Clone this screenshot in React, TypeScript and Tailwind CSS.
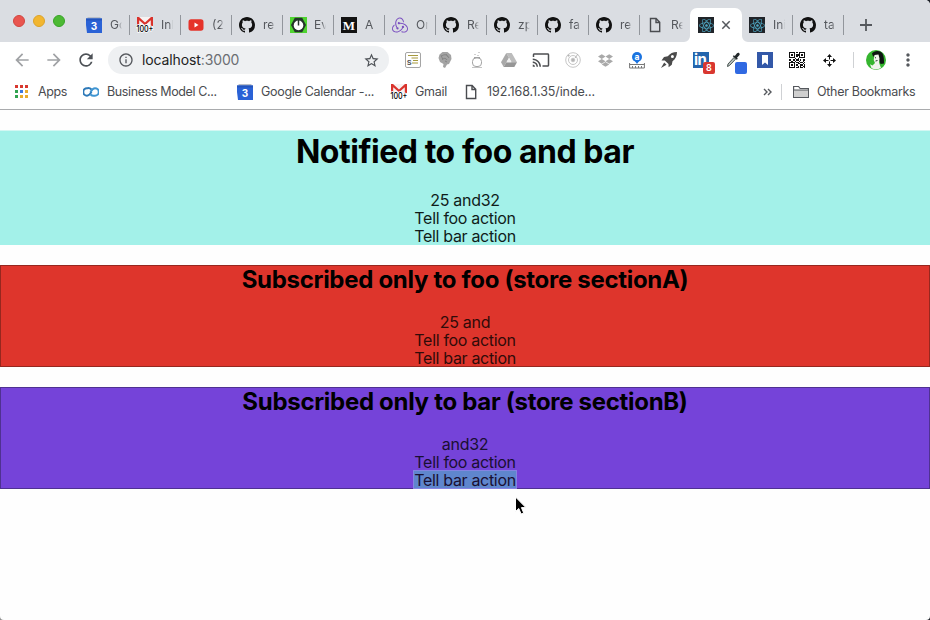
import React from "react";
import { SiRedux } from "react-icons/si";
import { FaReact, FaDropbox } from "react-icons/fa";
import {
  MdRefresh,
  MdArrowBack,
  MdArrowForward,
  MdInfoOutline,
  MdStarBorder,
  MdMoreVert,
  MdCast,
} from "react-icons/md";

const Calendar = () => (
  <svg width="16" height="16" viewBox="0 0 16 16">
    <path d="M1.5 0h13v4h-13z" fill="#b9bec8" />
    <path d="M0 1.5h16V16H1L0 8z" fill="#2a62d6" />
    <path d="M0 1.5h16v2H0z" fill="#2354bd" />
    <text x="8" y="12.6" textAnchor="middle" fontSize="10" fontWeight="700" fill="#fff" fontFamily="Inter, sans-serif">3</text>
  </svg>
);

const GmailIcon = () => (
  <svg width="16" height="16" viewBox="0 0 16 16" className="overflow-visible">
    <path d="M0 0h16v10H0z" fill="#f7f2f2" />
    <path d="M0 0h2l6 5.4L14 0h2v9h-2.2V3.2L8 8.2 2.2 3.2V9H0z" fill="#d9332c" />
    <text x="-0.6" y="15.2" fontSize="9" fontWeight="500" fill="#000" stroke="#fff" strokeWidth="1.6" paintOrder="stroke" textLength="17" lengthAdjust="spacingAndGlyphs" fontFamily="Inter, sans-serif">100+</text>
  </svg>
);

const Youtube = () => (
  <svg width="16" height="16" viewBox="0 0 16 16">
    <rect x="0.5" y="2.3" width="15" height="11.4" rx="2.6" fill="#e5332a" />
    <path d="M6.5 5.5v5l4-2.5z" fill="#fff" />
  </svg>
);

const Power = () => (
  <svg width="17" height="16" viewBox="0 0 17 16">
    <rect width="17" height="16" fill="#4fd430" />
    <path d="M4.8 0.8h7.4L16 8l-3.8 7.2H4.8L1 8z" fill="#24352a" />
    <circle cx="8.5" cy="8.4" r="4.8" fill="#fff" />
    <path d="M8.5 2.5v6" stroke="#24352a" strokeWidth="1.5" />
  </svg>
);

const Medium = () => (
  <div className="flex h-4 w-4 items-center justify-center bg-[#121212] font-['Liberation_Serif',serif] text-[13px] leading-none font-bold text-white">M</div>
);

const Page = () => (
  <svg width="16" height="16" viewBox="0 0 16 16" fill="none" stroke="#4a4c50" strokeWidth="1.4">
    <path d="M3.5 1.5h5.6l3.6 3.8v9.2H3.5zM9 1.7v3.8h3.6" />
  </svg>
);

const ReactTile = () => (
  <div className="flex h-4 w-4 items-center justify-center bg-[#202429]">
    <FaReact size={15} color="#4fa8c4" />
  </div>
);

const Github = () => (
  <svg width="16" height="16" viewBox="0 0 16 16" fill="#111">
    <path d="M8 0C3.58 0 0 3.58 0 8c0 3.54 2.29 6.53 5.47 7.59.4.07.55-.17.55-.38 0-.19-.01-.82-.01-1.49-2.01.37-2.53-.49-2.69-.94-.09-.23-.48-.94-.82-1.13-.28-.15-.68-.52-.01-.53.63-.01 1.08.58 1.23.82.72 1.21 1.87.87 2.33.66.07-.52.28-.87.51-1.07-1.78-.2-3.64-.89-3.64-3.95 0-.87.31-1.59.82-2.15-.08-.2-.36-1.02.08-2.12 0 0 .67-.21 2.2.82.64-.18 1.32-.27 2-.27.68 0 1.36.09 2 .27 1.53-1.04 2.2-.82 2.2-.82.44 1.1.16 1.92.08 2.12.51.56.82 1.27.82 2.15 0 3.07-1.87 3.75-3.65 3.95.29.25.54.73.54 1.48 0 1.07-.01 1.93-.01 2.2 0 .21.15.46.55.38A8.013 8.013 0 0016 8c0-4.42-3.58-8-8-8z" />
  </svg>
);

const tabs: { icon: React.ReactNode; label: string; last?: boolean }[] = [
  { icon: <Calendar />, label: "Go" },
  { icon: <GmailIcon />, label: "Inb" },
  { icon: <Youtube />, label: "(2" },
  { icon: <Github />, label: "re" },
  { icon: <Power />, label: "Ev" },
  { icon: <Medium />, label: "A" },
  { icon: <SiRedux size={16} color="#7a4fc0" />, label: "On" },
  { icon: <Github />, label: "Re" },
  { icon: <Github />, label: "zp" },
  { icon: <Github />, label: "fa" },
  { icon: <Github />, label: "re" },
  { icon: <Page />, label: "Re", last: true },
];

function Tab({ icon, label, last }: { icon: React.ReactNode; label: string; last?: boolean }) {
  return (
    <div className="flex h-full w-[51px] shrink-0 items-center pl-[7px]">
      <div className="w-4 shrink-0">{icon}</div>
      <div className="ml-2 w-[12px] overflow-hidden [mask-image:linear-gradient(to_right,#000_65%,transparent)] text-[12px] leading-4 whitespace-nowrap text-[#55585d]">{label}</div>
      <div className={last ? "hidden" : "ml-auto h-5 w-px bg-[#92969c]"} />
    </div>
  );
}

function TabStrip() {
  return (
    <div className="flex h-[42px] bg-[#dadde2]">
      <div className="flex w-[79px] shrink-0 gap-2 pt-[15px] pl-[13px]">
        <div className="h-3 w-3 rounded-full border border-[#d1453f] bg-[#e9554f]" />
        <div className="h-3 w-3 rounded-full border border-[#dca32a] bg-[#f2b630]" />
        <div className="h-3 w-3 rounded-full border border-[#37a427] bg-[#4cb934]" />
      </div>
      <div className="flex h-[34px] self-end">
        {tabs.map((t, i) => (
          <Tab key={i} {...t} />
        ))}
        <div className="relative -ml-px flex h-full w-[52px] items-center rounded-t-[7px] bg-white pl-2">
          <svg className="absolute bottom-0 -left-[6px]" width="6" height="6"><path d="M6 0v6H0a6 6 0 0 0 6-6z" fill="#fff" /></svg>
          <svg className="absolute -right-[6px] bottom-0" width="6" height="6"><path d="M0 0v6h6a6 6 0 0 1-6-6z" fill="#fff" /></svg>
          <ReactTile />
          <svg className="ml-[7px]" width="10" height="10" viewBox="0 0 10 10"><path d="M1.3 1.3l7.4 7.4M8.7 1.3L1.3 8.7" stroke="#55585d" strokeWidth="1.5" /></svg>
        </div>
        <Tab icon={<ReactTile />} label="Init" />
        <Tab icon={<Github />} label="ta" />
        <svg className="ml-4 self-center" width="12" height="12"><path d="M6 0v12M0 6h12" stroke="#55585d" strokeWidth="1.8" /></svg>
      </div>
    </div>
  );
}

const Slot = ({ children }: { children: React.ReactNode }) => (
  <div className="relative flex h-5 w-8 shrink-0 items-center justify-center">{children}</div>
);

const qrRows = [
  "1111101011111",
  "1000100010001",
  "1010101110101",
  "1000101010001",
  "1111100011111",
  "0000010100000",
  "1101101101011",
  "0010010010010",
  "1111101101101",
  "1000100110010",
  "1010101001101",
  "1000100101011",
  "1111101101101",
];

function Extensions() {
  return (
    <div className="flex items-center">
      <Slot>
        <svg width="16" height="16" viewBox="0 0 16 16">
          <rect x="0.5" y="0.5" width="15" height="15" rx="1.5" fill="#fff" stroke="#a5a5a5" />
          <path d="M3 3.5h10M6.5 6h6.5M8 8.500h5M7 11h6" stroke="#a79a3e" strokeWidth="1.2" />
          <text x="1.8" y="12.8" fontSize="9" fontWeight="600" fill="#555" fontFamily="Inter, sans-serif">s</text>
        </svg>
      </Slot>
      <Slot>
        <svg width="14" height="16" viewBox="0 0 14 16">
          <path d="M4.500 0h5l3.500 3 .5 4-2.500 5-2 .5L7 16l-2-1 .5-3L2 10 .5 6l1-3.500z" fill="#a3a3a3" />
          <path d="M3 5c2-3 6-3 7 0M4 7c2-1 4-1 5 1M7 9l2 1M3 3l2 5M8 2l3 4" stroke="#858585" fill="none" />
        </svg>
      </Slot>
      <Slot>
        <svg width="12" height="16" viewBox="0 0 12 16" fill="none" stroke="#a3a3a3">
          <rect x="1.5" y="6" width="9" height="8.5" rx="3.500" />
          <path d="M1 15.500h10" stroke="#c4c4c4" />
          <path d="M3 5.500h6M4 2v1M8 0v1M7 3v1" />
        </svg>
      </Slot>
      <Slot>
        <svg width="16" height="14" viewBox="0 0 16 14">
          <path d="M5.3 0h5.4L16 9.2h-5.4z" fill="#bcbcbc" />
          <path d="M5.3 0L0 9.2 2.7 14 8 4.7z" fill="#a9a9a9" />
          <path d="M5.4 9.2H16L13.3 14H2.7z" fill="#969696" />
          <path d="M8 5l2.3 4.2H5.6z" fill="#eee" />
        </svg>
      </Slot>
      <Slot><MdCast size={18} color="#4d4f52" /></Slot>
      <Slot>
        <svg width="16" height="16" viewBox="0 0 16 16" fill="none" stroke="#c6c6c6">
          <circle cx="8" cy="8" r="7.3" /><circle cx="8" cy="8" r="4.5" />
          <circle cx="8" cy="8" r="1.8" fill="#b5b5b5" /><path d="M10 6l3-4" stroke="#b5b5b5" />
          <circle cx="3.5" cy="3.5" r=".8" fill="#aaa" />
        </svg>
      </Slot>
      <Slot><FaDropbox size={15} color="#a9a9a9" /></Slot>
      <Slot>
        <svg width="16" height="17" viewBox="0 0 16 17">
          <path d="M.6 11v5h14.8v-5M.6 12.500h14.8M3.5 14v2M6.5 14v2M9.5 14v2M12.5 14v2" stroke="#777" fill="none" />
          <path d="M8 12L5.5 8.5h5z" fill="#1a73e0" /><circle cx="8" cy="5" r="5" fill="#1a73e0" />
          <text x="8" y="7.6" textAnchor="middle" fontSize="8.5" fontWeight="700" fill="#fff" fontFamily="Inter, sans-serif">a</text>
        </svg>
      </Slot>
      <Slot>
        <svg width="16" height="16" viewBox="0 0 16 16" fill="#4b4b4b">
          <path d="M16 0c-4 0-7 1.5-9.2 4.3L3 5 .5 8.6l3.3-.2 3.7 3.7.1 3.1 3.2-2.5.7-3.5C14.5 7 16 4 16 0zm-4.6 6.1a1.5 1.5 0 1 1 0-3 1.5 1.5 0 0 1 0 3z" fillRule="evenodd" />
          <path d="M3.2 10.5L0 16l5.5-3.2z" />
        </svg>
      </Slot>
      <Slot>
        <div className="h-4 w-4 bg-[#2465ad] pl-[1px] text-[15px] leading-[15px] font-bold tracking-[-0.5px] text-white">in</div>
        <div className="absolute top-[12px] left-[18px] flex h-3 w-3 items-center justify-center rounded-[2px] bg-[#d93730] text-[9px] font-semibold text-white">8</div>
      </Slot>
      <Slot>
        <svg width="14" height="16" viewBox="0 0 14 16">
          <path d="M1.500 14.500L2 12l6-6.500 1.600 1.600L3.500 13.500z" fill="#b9c2c0" stroke="#4a5552" strokeWidth="1" />
          <path d="M6.800 4.200l1-1 1 .8L11 1.200c1.500-1.500 3.600.4 2.300 2L11 5.800l.8 1-1 1z" fill="#22282a" />
        </svg>
        <div className="absolute top-[12px] left-[18px] h-3 w-3 rounded-[2px] bg-[#3069e2]" />
      </Slot>
      <Slot>
        <svg width="16" height="16"><path d="M0 0h16v16H0z" fill="#3358a8" /><path d="M5 3h6v10l-3-2.5L5 13z" fill="#fff" /></svg>
      </Slot>
      <Slot>
        <svg width="16" height="16" viewBox="0 0 13 13" shapeRendering="crispEdges">
          {qrRows.map((row, y) => row.split("").map((c, x) => c === "1" && <rect key={`${x}-${y}`} x={x} y={y} width="1" height="1" fill="#111" />))}
        </svg>
      </Slot>
      <Slot>
        <svg width="13" height="13" viewBox="0 0 13 13">
          <path d="M6.5 1v11M1 6.5h11" stroke="#111" strokeDasharray="4.5 2 4.5" />
          <path d="M6.5 0l2.5 3H4zM6.5 13L4 10h5zM0 6.5L3 4v5zM13 6.5L10 9V4z" fill="#111" />
        </svg>
      </Slot>
    </div>
  );
}

function Avatar() {
  return (
    <svg width="20" height="20" viewBox="0 0 20 20">
      <circle cx="10" cy="10" r="10" fill="#35b52f" />
      <path d="M6 3.500C8 0 15 0 16.500 3.500c1.500 3 1.500 6 1.500 10l-3.500.5-2.500-8-5 .5z" fill="#0d1511" />
      <path d="M8.500 5l4-.5 1 4-.5 4 2 5.500q-5 2.600-9.500.3l-1.500-4 2.500 1.200 2.500-2.500-1.300-3z" fill="#f0f4ed" />
      <path d="M9 7.500l1 .5M9.500 11l2-.5" stroke="#26372b" />
    </svg>
  );
}

function Toolbar() {
  return (
    <div className="flex h-[36px] items-center bg-white">
      <div className="flex w-[108px] shrink-0 items-center gap-[12px] pl-3">
        <MdArrowBack size={20} color="#a0a2a5" />
        <MdArrowForward size={20} color="#a0a2a5" />
        <MdRefresh size={20} color="#4d5156" />
      </div>
      <div className="flex h-7 w-[281px] shrink-0 items-center rounded-full bg-[#eef0f2] pr-[9px] pl-[10px]">
        <MdInfoOutline size={16} color="#55585d" />
        <div className="ml-2 text-[14px] leading-5 tracking-[-0.12px] text-[#222]">localhost<span className="text-[#6b6e72]">:3000</span></div>
        <MdStarBorder className="ml-auto" size={17} color="#4d5156" />
      </div>
      <div className="ml-2"><Extensions /></div>
      <div className="ml-2 h-4 w-px bg-[#cfd1d4]" />
      <div className="ml-3"><Avatar /></div>
      <MdMoreVert className="ml-3" size={20} color="#55585d" />
    </div>
  );
}

const appColors = [
  "bg-[#d8382f]", "bg-[#d8382f]", "bg-[#d8382f]",
  "bg-[#31a350]", "bg-[#3b78e0]", "bg-[#e8ac2d]",
  "bg-[#31a350]", "bg-[#e8ac2d]", "bg-[#e8ac2d]",
];

function Bookmarks() {
  return (
    <div className="flex h-[32px] items-center border-b border-[#a9abad] bg-white pb-[4px] pl-[15px] text-[12.5px] leading-4 whitespace-nowrap text-[#4a4c50]">
      <div className="flex w-[68px] shrink-0 items-center">
        <div className="grid grid-cols-3 gap-[2px]">
          {appColors.map((c, i) => <div key={i} className={`h-[3px] w-[3px] ${c}`} />)}
        </div>
        <span className="ml-[10px] tracking-[-0.4px]">Apps</span>
      </div>
      <div className="flex w-[154px] shrink-0 items-center gap-2">
        <svg width="16" height="10" viewBox="0 0 16 10" fill="none" strokeWidth="2">
          <path d="M8.5 2.5C6.5.5 5 1.2 4 1.2a3.7 3.7 0 0 0 0 7.5c2.5 0 3.5-2.2 4.5-4" stroke="#2d79b8" />
          <path d="M7.5 7.5c2 2 3.5 1.2 4.5 1.2a3.7 3.7 0 0 0 0-7.5c-2.5 0-3.5 2.2-4.5 4" stroke="#3f95d2" />
        </svg>
        <span className="tracking-[-0.37px]">Business Model C...</span>
      </div>
      <div className="flex w-[154px] shrink-0 items-center gap-2">
        <Calendar /><span className="tracking-[-0.3px]">Google Calendar -...</span>
      </div>
      <div className="flex w-[72px] shrink-0 items-center gap-2">
        <GmailIcon /><span className="tracking-[-0.25px]">Gmail</span>
      </div>
      <div className="flex shrink-0 items-center gap-2">
        <Page /><span className="tracking-[-0.1px]">192.168.1.35/inde...</span>
      </div>
      <div className="ml-auto flex w-[167px] shrink-0 items-center">
        <svg width="9" height="8" viewBox="0 0 9 8" fill="none" stroke="#55585d" strokeWidth="1.4"><path d="M1 1l3 3-3 3M5 1l3 3-3 3" /></svg>
        <div className="ml-[9px] h-4 w-px bg-[#cfd1d4]" />
        <svg className="ml-[11px]" width="16" height="14" viewBox="0 0 16 14"><path d="M.6 12.5v-11h5l1.5 2h8.3v9z" fill="#fff" stroke="#55585d" strokeWidth="1.2" /><path d="M1.2 5h13.6v7H1.2z" fill="#cfcfcf" /><path d="M.6 5h14.8" stroke="#55585d" /></svg>
        <span className="ml-2 tracking-[-0.3px]">Other Bookmarks</span>
      </div>
    </div>
  );
}

function Section({ title, value, className, focused }: { title: string; value: string; className: string; focused?: boolean }) {
  return (
    <section className={`mt-5 h-[102px] border text-center text-[16px] leading-[18px] tracking-[-0.32px] ${className}`}>
      <h2 className="mb-[19px] text-[24px] leading-[28px] font-bold tracking-[-0.3px] text-black">{title}</h2>
      <div>{value}</div>
      <div>Tell foo action</div>
      <div><span className={focused ? "inline-block h-[17px] bg-[#5f86cd] outline-1 outline-[#8583e2]" : ""}>Tell bar action</span></div>
    </section>
  );
}

export default function App() {
  return (
    <div className="h-[620px] w-[930px] overflow-hidden bg-linear-to-r from-[#8d8d8d] to-[#1d2128] font-[Inter,sans-serif]">
      <div className="relative h-full w-full overflow-hidden rounded-tr-[5px] rounded-br-[4px] rounded-bl-[4px] bg-[#fefefe]">
        <TabStrip />
        <Toolbar />
        <Bookmarks />
        <main>
          <section className="mt-5 h-[115px] border-t border-[#d3f7f3] bg-[#a3f1e9] text-center text-[16px] leading-[18px] tracking-[-0.32px] text-[#101c1a]">
            <h1 className="mb-[19px] text-[32px] leading-[41px] font-bold tracking-[-0.46px] text-black">Notified to foo and bar</h1>
            <div>25 and32</div>
            <div>Tell foo action</div>
            <div>Tell bar action</div>
          </section>
          <Section title="Subscribed only to foo (store sectionA)" value="25 and" className="border-[#96271f] bg-[#de352c] text-[#300b09]" />
          <Section title="Subscribed only to bar (store sectionB)" value="and32" className="border-[#4f3191] bg-[#7543d9] text-[#1a0f32]" focused />
        </main>
        <svg className="absolute top-[496px] left-[514px]" width="14" height="20" viewBox="0 0 14 20">
          <path d="M1.5 1v14.5l3.3-3 2.3 5.5 2.6-1.1-2.3-5.3h4.5z" fill="#000" stroke="#fff" strokeWidth="1" />
        </svg>
      </div>
    </div>
  );
}
